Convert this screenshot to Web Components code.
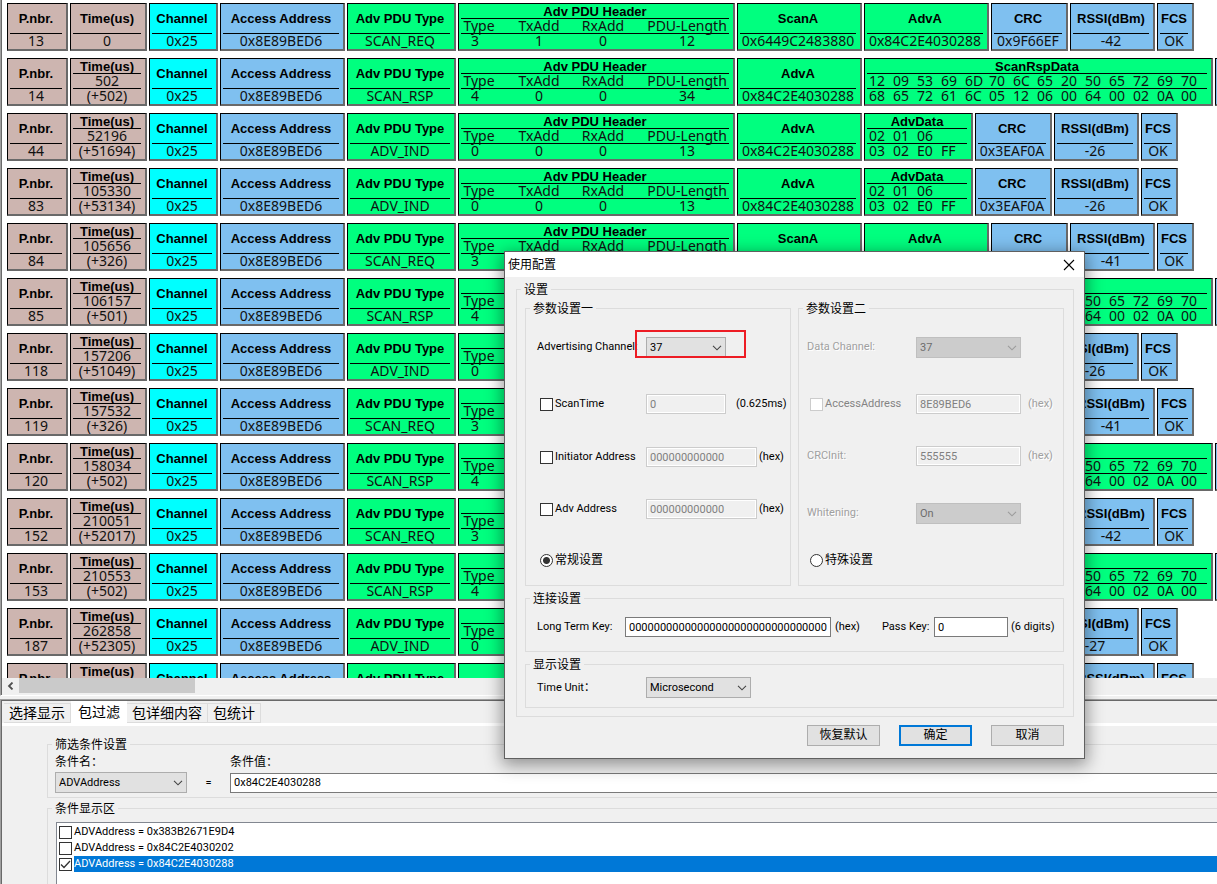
<!DOCTYPE html>
<html lang="zh-CN">
<head>
<meta charset="utf-8">
<title>Packet Sniffer</title>
<style>
  html, body { margin: 0; height: 100%; }
  body { overflow: hidden; background: #f0f0f0; color: #000;
    font: 11px/16px Roboto, "Noto Sans CJK SC", sans-serif; }
</style>
</head>
<body>
<sniffer-app></sniffer-app>
<script>
class Base extends HTMLElement {
  constructor() { super(); this.attachShadow({ mode: 'open' }); }
  connectedCallback() { if (!this.shadowRoot.firstChild) this.shadowRoot.innerHTML = this.render(); }
  attr(n, d = '') { return this.hasAttribute(n) ? this.getAttribute(n) : d; }
}

const CHECK_CSS = `
  input[type=checkbox], input[type=radio] { appearance: none; margin: 0; flex: none; width: 13px; height: 13px;
    box-sizing: border-box; border: 1px solid #333; background: #fff; }
  input[type=radio] { border-radius: 50%; }
  input[type=radio]:checked { background: radial-gradient(circle, #333 0 3px, #fff 4px); }
  input[type=checkbox]:checked { background: #fff url("data:image/svg+xml,%3Csvg xmlns='http://www.w3.org/2000/svg' viewBox='0 0 11 11'%3E%3Cpath d='M1 5.5 4 8.5 10 2' fill='none' stroke='%23333' stroke-width='1.3'/%3E%3C/svg%3E"); }
  input:disabled[type=checkbox] { border-color: #ccc; }`;

/* ---------- packet list ---------- */
customElements.define('packet-cell', class extends Base {
  render() {
    const lines = [...this.children].length;
    return `<style>
      :host { display: block; flex: none; box-sizing: border-box; height: 48px; background: var(--fill);
        border: 1px solid #000; border-right: 2px solid #696969; border-bottom: 2px solid #696969;
        padding: 0 4px 0 2px; text-align: center; font: 14px/13px "Noto Sans", sans-serif; color: #111; white-space: nowrap; }
      .name { box-sizing: border-box; border-bottom: 1px solid #000; height: ${lines > 1 ? 15 : 30}px;
        font: bold 13px/${lines > 1 ? 15 : 29}px "Liberation Sans", Arial, sans-serif; color: #000; }
      ::slotted(*) { box-sizing: border-box; height: 15px; }
      ::slotted(:not(:last-child)) { border-bottom: 1px solid #000; }
    </style><div class="name">${this.attr('name')}</div><slot></slot>`;
  }
});

const COLORS = { rose: '#cdb5b0', cyan: '#00ffff', blue: '#7fc0f0', green: '#00ff7f' };
const cell = (name, color, width, ...lines) =>
  `<packet-cell name="${name}" style="--fill:${COLORS[color]};width:${width}px">${lines.map(l =>
    Array.isArray(l) ? `<div class="${l[0]}">${l[1].map(v => `<span>${v}</span>`).join('')}</div>` : `<div>${l}</div>`).join('')}</packet-cell>`;

const RSP_1 = '12 09 53 69 6D 70 6C 65 20 50 65 72 69 70'.split(' ');
const RSP_2 = '68 65 72 61 6C 05 12 06 00 64 00 02 0A 00'.split(' ');
const KINDS = {
  REQ: { type: 'SCAN_REQ', head: [3, 1, 0, 12], crc: '0x9F66EF',
    body: cell('ScanA', 'green', 125, '0x6449C2483880') + cell('AdvA', 'green', 125, '0x84C2E4030288') },
  RSP: { type: 'SCAN_RSP', head: [4, 0, 0, 34], crc: '0x5A1C07',
    body: cell('AdvA', 'green', 125, '0x84C2E4030288') + cell('ScanRspData', 'green', 349, ['bytes', RSP_1], ['bytes', RSP_2]) },
  IND: { type: 'ADV_IND', head: [0, 0, 0, 13], crc: '0x3EAF0A',
    body: cell('AdvA', 'green', 125, '0x84C2E4030288') + cell('AdvData', 'green', 109, ['bytes', ['02', '01', '06']], ['bytes', ['03', '02', 'E0', 'FF']]) }
};

customElements.define('packet-row', class extends Base {
  render() {
    const k = KINDS[this.attr('kind')], delta = this.attr('delta');
    const time = delta ? [this.attr('time'), `(+${delta})`] : [this.attr('time')];
    return `<style>
      :host { display: flex; gap: 2px; flex: none; }
      .cols { display: grid; grid-template-columns: 32px 40px 40px 80px; gap: 24px; padding-left: 2px; justify-items: center; }
      .vals span:first-child { justify-self: start; padding-left: 8px; }
      .bytes { display: flex; padding-left: 2px; text-align: left; }
      .bytes span { width: 24px; flex: none; }
    </style>` +
      cell('P.nbr.', 'rose', 61, this.attr('number')) +
      cell('Time(us)', 'rose', 77, ...time) +
      cell('Channel', 'cyan', 69, '0x25') +
      cell('Access Address', 'blue', 125, '0x8E89BED6') +
      cell('Adv PDU Type', 'green', 109, k.type) +
      cell('Adv PDU Header', 'green', 277, ['cols', ['Type', 'TxAdd', 'RxAdd', 'PDU-Length']], ['cols vals', k.head]) +
      k.body + cell('CRC', 'blue', 77, k.crc) +
      cell('RSSI(dBm)', 'blue', 85, this.attr('rssi')) + cell('FCS', 'blue', 37, 'OK');
  }
});

const PACKETS = [
  [13, 0, '', 'REQ', -42], [14, 502, 502, 'RSP', -26], [44, 52196, 51694, 'IND', -26],
  [83, 105330, 53134, 'IND', -26], [84, 105656, 326, 'REQ', -41], [85, 106157, 501, 'RSP', -26],
  [118, 157206, 51049, 'IND', -26], [119, 157532, 326, 'REQ', -41], [120, 158034, 502, 'RSP', -26],
  [152, 210051, 52017, 'REQ', -42], [153, 210553, 502, 'RSP', -26], [187, 262858, 52305, 'IND', -27],
  [188, 263184, 326, 'REQ', -42]
];

customElements.define('packet-list', class extends Base {
  render() {
    return `<style>
      :host { display: flex; flex-direction: column; min-height: 0; margin-bottom: 3px; border-left: 1px solid #a0a0a0; border-bottom: 1px solid #fff; }
      .rows { flex: 1; min-height: 0; overflow: hidden; background: #fff; border-left: 1px solid #696969;
        display: flex; flex-direction: column; gap: 7px; padding: 3px 0 0 5px; }
      .bar { flex: none; display: flex; height: 17px; border-left: 1px solid #696969; }
      button { width: 17px; height: 15px; border: 0; padding: 0; background: none; }
      svg { display: block; margin: auto; }
      .thumb { width: 176px; height: 15px; background: #cacaca; }
    </style>
    <div class="rows">${PACKETS.map(([n, t, d, k, r]) =>
      `<packet-row number="${n}" time="${t}" delta="${d}" kind="${k}" rssi="${r}"></packet-row>`).join('')}</div>
    <div class="bar"><button aria-label="Scroll left"><svg width="7" height="8" viewBox="0 0 7 8"><path d="M5.5 .5 2 4l3.500 3.500" fill="none" stroke="#505050" stroke-width="1.800"/></svg></button><div class="thumb"></div></div>`;
  }
});

/* ---------- shared form parts ---------- */
customElements.define('group-box', class extends Base {
  render() {
    return `<style>
      :host { display: block; min-width: 0; }
      fieldset { box-sizing: border-box; width: 100%; height: 100%; min-width: 0; margin: 0; padding: 0; border: 1px solid #dcdcdc;
        border-right-width: var(--right-edge, 1px); border-bottom-width: var(--bottom-edge, 1px); }
      legend { margin-left: 4px; padding: 0 3px; font-size: 12px; line-height: 18px; height: 16px; }
    </style><fieldset><legend>${this.attr('label')}</legend><slot></slot></fieldset>`;
  }
});

customElements.define('drop-down', class extends Base {
  render() {
    return `<style>
      :host { display: block; position: relative; flex: none; box-sizing: border-box; height: 21px; }
      select { appearance: none; box-sizing: border-box; width: 100%; height: 21px; margin: 0; padding: 0 20px 0 3px; border: 1px solid #adadad;
        border-radius: 0; background: #e1e1e1; color: #000; font: inherit; line-height: 19px; }
      select:disabled { background: #ccc; border-color: #bfbfbf; color: #6d6d6d; opacity: 1; }
      svg { position: absolute; right: 4px; top: 8px; pointer-events: none; }
      select:disabled + svg { opacity: .35; }
    </style><select aria-label="${this.attr('label')}" ${this.attr('state')}><option>${this.attr('value')}</option></select>
    <svg width="10" height="6" viewBox="0 0 10 6"><path d="M1 .8 5 4.800 9 .8" fill="none" stroke="#444" stroke-width="1.100"/></svg>`;
  }
});

/* label (optionally a tick box), a control and a unit, in one line */
customElements.define('form-field', class extends Base {
  render() {
    const label = this.attr('label'), off = this.attr('state'), value = this.attr('value');
    const labelOff = this.hasAttribute('label-off') ? 'disabled' : '';
    const head = this.hasAttribute('tick')
      ? `<label class="head tick ${labelOff}"><input type="checkbox" ${labelOff}>${label}</label>`
      : `<label class="head ${labelOff}" for="c">${label}</label>`;
    const control = this.hasAttribute('select')
      ? `<drop-down class="control" label="${label}" value="${value}" state="${off}"></drop-down>`
      : `<input id="c" class="control" type="text" aria-label="${label}" value="${value}" ${off}>`;
    return `<style>
      :host { display: flex; align-items: center; white-space: nowrap; }
      .head { width: var(--head, 109px); flex: none; }
      .tick { display: flex; align-items: center; gap: 2px; box-sizing: border-box; padding-left: 3px; }
      .head.disabled, .unit.disabled { color: #a0a0a0; text-shadow: 1px 1px #fff; }
      .tick.disabled { color: #838383; text-shadow: none; }
      .control { width: var(--control, 105px); flex: none; }
      input.control { box-sizing: border-box; height: 20px; margin: 0; padding: 0 3px; border: 1px solid #7a7a7a; background: #fff; color: #000; font: inherit; }
      input.control:disabled { border-color: #ccc; background: #f0f0f0; box-shadow: inset 0 0 0 1px #fff; color: #808080; }
      .unit { margin-left: var(--unit-gap, 7px); }
      ${CHECK_CSS}
    </style>${head}${control}<span class="unit ${labelOff}">${this.attr('unit')}</span>`;
  }
});

customElements.define('radio-option', class extends Base {
  render() {
    return `<style>:host { display: flex; align-items: center; }
      label { display: flex; align-items: center; gap: 2px; padding-left: 3px; font-size: 12px; }
      ${CHECK_CSS}</style><label><input type="radio" name="mode" ${this.attr('state')}>${this.attr('label')}</label>`;
  }
});

/* ---------- configuration dialog ---------- */
customElements.define('config-dialog', class extends Base {
  render() {
    return `<style>
      :host { display: block; box-sizing: border-box; width: 581px; background: #f0f0f0; border: 1px solid #606060;
        box-shadow: 0 4px 16px 2px rgba(0,0,0,.4); }
      header { display: flex; align-items: center; justify-content: space-between; height: 25px; padding: 0 9px 0 3px; background: #fff; font-size: 12px; }
      header button { border: 0; padding: 0; background: none; width: 12px; height: 12px; }
      header svg { display: block; }
      .outer { margin: 4px 10px 0 11px; }
      .stack { display: grid; gap: 4px; padding: 3px 9px 8px 8px; }
      .pair { display: grid; grid-template-columns: 1fr 1fr; gap: 7px; }
      .pair group-box { height: 286px; }
      .rows { display: grid; padding: 4px 0 0 11px; grid-template-rows: 54px 60px 46px 58px 44px; }
      .right .rows { padding-left: 8px; grid-template-rows: 54px 60px 44px 70px 24px; }
      .short { --control: 80px; --unit-gap: 10px; }
      .long { --control: 111px; --unit-gap: 2px; }
      .marked { position: relative; }
      .mark { position: absolute; left: 98px; top: 10px; width: 111px; height: 28px; box-sizing: border-box; border: 2px solid #ed1c24; }
      .link { height: 62px; }
      .view { height: 52px; }
      .line { display: flex; padding: 5px 11px 0; gap: 22px; }
      .line.link-line { padding-top: 11px; }
      .ltk { --head: 88px; --control: 206px; --unit-gap: 4px; }
      .pass { --head: 52px; --control: 74px; --unit-gap: 3px; }
      footer { display: flex; justify-content: flex-end; gap: 19px; padding: 8px 20px 12px; }
      footer button { width: 73px; height: 21px; box-sizing: border-box; padding: 0; border: 1px solid #adadad; background: #e1e1e1; color: #000; font: inherit; font-size: 12px; line-height: 19px; }
      footer .primary { border: 2px solid #0078d7; line-height: 17px; }
    </style>
    <header><span>使用配置</span><button aria-label="Close"><svg width="12" height="12" viewBox="0 0 12 12"><path d="M1 1 11 11M11 1 1 11" stroke="#000" stroke-width="1.100"/></svg></button></header>
    <group-box class="outer" label="设置"><div class="stack">
      <div class="pair">
        <group-box label="参数设置一"><div class="rows">
          <div class="marked"><form-field class="short" style="height:100%" select label="Advertising Channel:" value="37"></form-field><span class="mark"></span></div>
          <form-field class="short" tick label="ScanTime" value="0" state="disabled" unit="(0.625ms)"></form-field>
          <form-field class="long" tick label="Initiator Address" value="000000000000" state="disabled" unit="(hex)"></form-field>
          <form-field class="long" tick label="Adv Address" value="000000000000" state="disabled" unit="(hex)"></form-field>
          <radio-option label="常规设置" state="checked"></radio-option>
        </div></group-box>
        <group-box class="right" label="参数设置二"><div class="rows">
          <form-field select label-off label="Data Channel:" value="37" state="disabled"></form-field>
          <form-field tick label-off label="AccessAddress" value="8E89BED6" state="disabled" unit="(hex)"></form-field>
          <form-field label-off label="CRCInit:" value="555555" state="disabled" unit="(hex)"></form-field>
          <form-field select label-off label="Whitening:" value="On" state="disabled"></form-field>
          <radio-option label="特殊设置"></radio-option>
        </div></group-box>
      </div>
      <group-box class="link" label="连接设置"><div class="line link-line">
        <form-field class="ltk" label="Long Term Key:" value="00000000000000000000000000000000" unit="(hex)"></form-field>
        <form-field class="pass" label="Pass Key:" value="0" unit="(6 digits)"></form-field>
      </div></group-box>
      <group-box class="view" label="显示设置"><div class="line">
        <form-field select label="Time Unit：" value="Microsecond"></form-field>
      </div></group-box>
    </div></group-box>
    <footer><button>恢复默认</button><button class="primary">确定</button><button>取消</button></footer>`;
  }
});

/* ---------- filter pane ---------- */
customElements.define('filter-item', class extends Base {
  render() {
    return `<style>
      :host { display: block; }
      label { display: flex; align-items: center; gap: 2px; padding-left: 2px; height: 16px; }
      span { flex: 1; height: 16px; line-height: 16px; }
      :host([selected]) span { background: #0078d7; color: #fff; }
      ${CHECK_CSS}
    </style><label><input type="checkbox" ${this.hasAttribute('selected') ? 'checked' : ''}><span>${this.attr('label')}</span></label>`;
  }
});

customElements.define('filter-pane', class extends Base {
  render() {
    return `<style>
      :host { display: flex; flex-direction: column; overflow: hidden; border-left: 1px solid #a0a0a0; border-top: 1px solid #a0a0a0; }
      .frame { flex: 1; display: flex; flex-direction: column; min-height: 0; border-left: 1px solid #696969; border-top: 1px solid #696969; }
      nav { display: flex; align-items: flex-end; height: 22px; padding-left: 2px; flex: none; }
      nav button { box-sizing: border-box; height: 20px; margin: 0; padding: 0 5px 2px; border: 1px solid #dcdcdc; border-width: 1px 1px 1px 0; background: #f0f0f0; color: #000;
        font: 14px/16px "Noto Sans CJK SC", sans-serif; }
      nav .active { height: 22px; padding: 0 7px 2px; border: 0; background: #fff; }
      .strip { height: 3px; flex: none; background: #fff; }
      .body { display: flex; flex-direction: column; gap: 2px; flex: 1; min-height: 0; padding: 10px 0 0 45px; }
      group-box { --right-edge: 0; }
      .cond { height: 62px; flex: none; }
      .grid { display: grid; grid-template-columns: 132px 43px 1fr; grid-template-rows: 20px 21px; padding-left: 7px; align-items: center; }
      .cap { font-size: 12px; line-height: 18px; }
      .eq { grid-row: 2; grid-column: 2; text-align: center; }
      .wide { grid-column: 3; }
      input { grid-column: 3; box-sizing: border-box; width: 100%; height: 20px; margin: 0; padding: 0 3px; border: 1px solid #7a7a7a; border-right: 0; background: #fff; font: inherit; }
      .shown { flex: 1; --bottom-edge: 0; }
      .list { margin: 6px 0 0 8px; height: 80px; padding-top: 1px; border: 1px solid #828790; border-right: 0; background: #fff; }
    </style>
    <div class="frame">
      <nav><button>选择显示</button><button class="active">包过滤</button><button>包详细内容</button><button>包统计</button></nav>
      <div class="strip"></div>
      <div class="body">
        <group-box class="cond" label="筛选条件设置"><div class="grid">
          <span class="cap">条件名：</span><label class="cap wide" for="value">条件值：</label>
          <drop-down label="条件名" value="ADVAddress"></drop-down><span class="eq">=</span>
          <input id="value" type="text" value="0x84C2E4030288">
        </div></group-box>
        <group-box class="shown" label="条件显示区"><div class="list">
          <filter-item label="ADVAddress = 0x383B2671E9D4"></filter-item>
          <filter-item label="ADVAddress = 0x84C2E4030202"></filter-item>
          <filter-item selected label="ADVAddress = 0x84C2E4030288"></filter-item>
        </div></group-box>
      </div>
    </div>`;
  }
});

customElements.define('sniffer-app', class extends Base {
  render() {
    return `<style>
      :host { display: grid; grid-template-rows: minmax(0, 1fr) 185px; grid-template-columns: minmax(0, 1fr); height: 100vh; position: relative; overflow: hidden; }
      config-dialog { position: absolute; left: 504px; top: 251px; }
    </style><packet-list></packet-list><filter-pane></filter-pane><config-dialog></config-dialog>`;
  }
});
</script>
</body>
</html>
